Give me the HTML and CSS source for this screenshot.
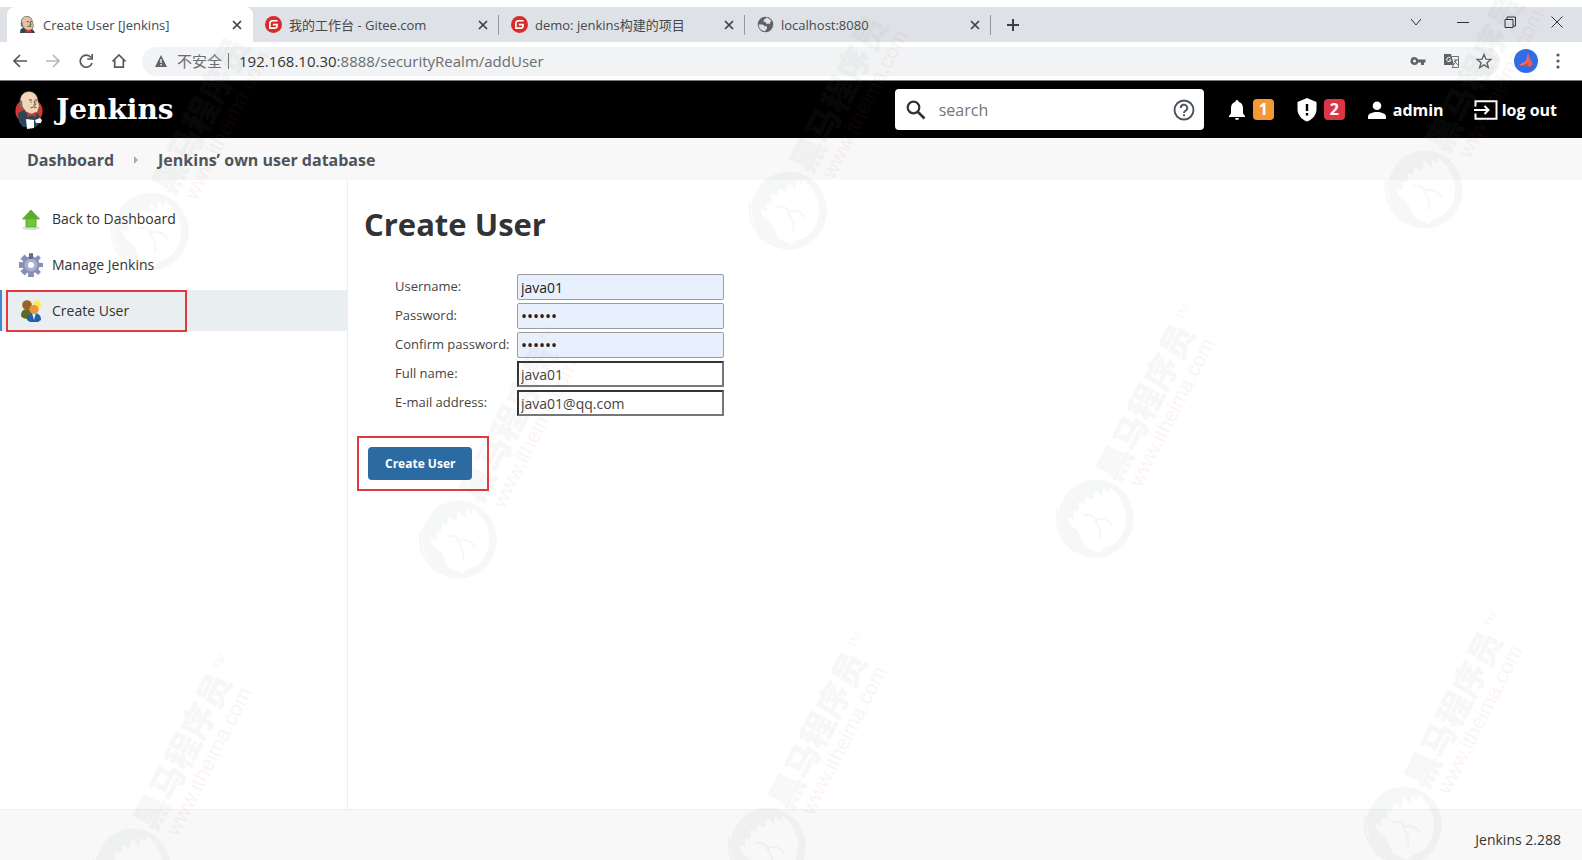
FILE: index.html
```html
<!DOCTYPE html>
<html lang="en">
<head>
<meta charset="utf-8">
<title>Create User [Jenkins]</title>
<link rel="stylesheet" href="styles.css">
</head>
<body>
<svg class="defs" aria-hidden="true">
  <symbol id="butler" viewBox="0 0 28 38">
    <ellipse cx="14" cy="20" rx="13.600" ry="13" fill="#d33833"/>
    <path d="M3 22l6-3 5 4 6-2 4 3 1 8-4 4H8l-4-5z" fill="#2b4757"/>
    <path d="M5 11C5 4 9 .5 14 .5S22.500 4 23 10l1.500 5-2 6-5 2.500-6-2-3-4-3-2z" fill="#f0d6b7" stroke="#5d4a3c" stroke-width=".6"/>
    <path d="M5 9l2 1 .5 5 2 4-2-1-2-3z" fill="#6d6b6d"/>
    <path d="M14 9h3M19.500 9h2.500M19 10l1.500 4h-2M15.500 17q3-2 6-.5" fill="none" stroke="#4b3b30" stroke-width=".9"/>
    <circle cx="16" cy="11" r=".6" fill="#333"/><circle cx="21" cy="11" r=".6" fill="#333"/>
    <path d="M12 21l4 2 4.500-2 .5 5-4.500-1.500L12.500 26z" fill="#d33833"/>
    <path d="M11 28l8 1v8l-7 1z" fill="#fff"/>
    <path d="M20 29l5-2 2 2-1 3-5 0z" fill="#f7f7f7"/>
  </symbol>
  <symbol id="gitee" viewBox="0 0 18 18">
    <circle cx="9" cy="9" r="9" fill="#d92b2b"/>
    <path d="M13.300 5H8.200Q5.200 5 5.200 8v4.800h4.900q2.700 0 2.700-2.600V9.100H8.300" fill="none" stroke="#fff" stroke-width="1.700"/>
  </symbol>
  <symbol id="close" viewBox="0 0 10 10"><path d="M1 1l8 8M9 1L1 9" fill="none" stroke="currentColor" stroke-width="1.700"/></symbol>
</svg>

<div class="page">
  <div class="tabstrip">
    <div class="tab tab-active">
      <svg class="favicon" viewBox="3 0 24 27"><path d="M3 27l1-6 6-3 5 4 6-2 4 3 2 4z" fill="#2b4757"/><path d="M5 11C5 4 9 .5 14 .5S22.500 4 23 10l1.500 5-2 6-5 2.500-6-2-3-4-3-2z" fill="#e0c3a2" stroke="#5d4a3c"/><path d="M5 9l2 1 .5 5 2 5-3-2-2-3z" fill="#6d6b6d"/><path d="M14 9h3M19.500 9h2.500M19 10l1.500 4h-2M15 17q3-2 6-.5" fill="none" stroke="#4b3b30" stroke-width="1.500"/><path d="M12 21l4 2 4.500-2 .5 6-4.500-1.500L12.500 27z" fill="#d33833"/></svg>
      <span class="tab-title">Create User [Jenkins]</span>
      <button class="tab-close" aria-label="Close tab"><svg><use href="#close"/></svg></button>
    </div>
    <div class="tab tab-divided">
      <svg class="favicon"><use href="#gitee"/></svg>
      <span class="tab-title">我的工作台 - Gitee.com</span>
      <button class="tab-close" aria-label="Close tab"><svg><use href="#close"/></svg></button>
    </div>
    <div class="tab tab-divided">
      <svg class="favicon"><use href="#gitee"/></svg>
      <span class="tab-title">demo: jenkins构建的项目</span>
      <button class="tab-close" aria-label="Close tab"><svg><use href="#close"/></svg></button>
    </div>
    <div class="tab tab-divided">
      <svg class="favicon" viewBox="0 0 24 24"><circle cx="12" cy="12" r="11" fill="#5f6368"/><path d="M2.500 12H8l3 2.500h3V18l-3 3.500Q2.500 20 2.500 12zM10 5l4-3 6 4-2 5h-5l-1-3-3 0z" fill="#dee1e6"/></svg>
      <span class="tab-title">localhost:8080</span>
      <button class="tab-close" aria-label="Close tab"><svg><use href="#close"/></svg></button>
    </div>
    <button class="new-tab" aria-label="New tab"><svg width="14" height="14" viewBox="0 0 14 14"><path d="M7 1v12M1 7h12" stroke="currentColor" stroke-width="2"/></svg></button>
    <div class="window-controls">
      <button aria-label="Search tabs"><svg width="12" height="12" viewBox="0 0 12 12"><path d="M1 3l5 6 5-6"/></svg></button>
      <button aria-label="Minimize"><svg width="12" height="12" viewBox="0 0 12 12"><path d="M0 6.500h12"/></svg></button>
      <button aria-label="Restore"><svg width="12" height="12" viewBox="0 0 12 12"><path d="M1 3.500h8v8H1zM3 3V1h8.500v9H9"/></svg></button>
      <button aria-label="Close window"><svg width="12" height="12" viewBox="0 0 12 12"><path d="M.5.5l11 11M11.500.5l-11 11"/></svg></button>
    </div>
  </div>

  <div class="toolbar">
    <div class="nav-buttons">
      <button aria-label="Back"><svg width="14" height="14" viewBox="0 0 14 14"><path d="M14 7H1M7 1L1 7l6 6"/></svg></button>
      <button class="nav-off" aria-label="Forward"><svg width="14" height="14" viewBox="0 0 14 14"><path d="M0 7h13M7 1l6 6-6 6"/></svg></button>
      <button aria-label="Reload"><svg width="14" height="14" viewBox="0 0 14 14"><path d="M12 3.500A6 6 0 1 0 13 9M13.200 0v5H8.200"/></svg></button>
      <button aria-label="Home"><svg width="14" height="14" viewBox="0 0 14 14"><path d="M.5 7.500L7 1l6.500 6.500M2.700 6v7.200h8.600V6"/></svg></button>
    </div>
    <div class="omnibox">
      <svg width="12" height="12" viewBox="0 0 12 12"><path d="M6 0l6 12H0z" fill="#5f6368"/><path d="M6 4v4M6 9v1.500" stroke="#fff" stroke-width="1.300"/></svg>
      <span class="insecure">不安全</span>
      <span class="omni-sep"></span>
      <span class="url"><b>192.168.10.30</b>:8888/securityRealm/addUser</span>
      <div class="omni-icons">
        <svg width="16" height="16" viewBox="0 0 16 16"><path fill-rule="evenodd" d="M4.500 4a4 4 0 1 0 3.700 5.500H11V12h3V9.500h1.500v-3H8.200A4 4 0 0 0 4.500 4zm0 2.500a1.500 1.500 0 1 1 0 3 1.500 1.500 0 0 1 0-3z" fill="#5f6368"/></svg>
        <svg width="16" height="16" viewBox="0 0 16 16"><path d="M1 1h7l3 11H1z" fill="#5f6368"/><path d="M8.500 3.500h7v11H9l2-3M11 7h4M13 6v1q0 3-3 5M11 8l4 4" fill="none" stroke="#6f7378"/><path d="M7.500 5A2.200 2.200 0 1 0 8 7H6" fill="none" stroke="#fff"/></svg>
        <svg width="16" height="16" viewBox="0 0 16 16"><path d="M8 1.500l1.900 4.700 5 .3-3.900 3.200 1.300 4.900L8 11.900l-4.300 2.700L5 9.700 1.100 6.500l5-.3z" fill="none" stroke="#5f6368" stroke-width="1.400"/></svg>
      </div>
    </div>
    <svg class="avatar" viewBox="0 0 24 24"><circle cx="12" cy="12" r="12" fill="#2f6de8"/><path d="M14 4l1 9-6 4-4-1 7-4z" fill="#ff6d5f"/><path d="M14 4l2 5 3 6-3 3-3-2z" fill="#ee5d55"/><path d="M7 17l6-3 2 5-3-2z" fill="#c24b58"/></svg>
    <button class="kebab" aria-label="Menu"><svg width="4" height="16" viewBox="0 0 4 16"><circle cx="2" cy="2" r="1.600"/><circle cx="2" cy="8" r="1.600"/><circle cx="2" cy="14" r="1.600"/></svg></button>
  </div>

  <header class="header">
    <a class="brand" href="#"><svg width="28" height="38"><use href="#butler"/></svg><span>Jenkins</span></a>
    <div class="search">
      <svg width="20" height="20" viewBox="0 0 20 20"><circle cx="7.500" cy="7.500" r="5.800" fill="none" stroke="#333" stroke-width="2.200"/><path d="M12 12l6.500 6.500" stroke="#333" stroke-width="2.600"/></svg>
      <input type="text" placeholder="search" aria-label="search">
      <a href="#" aria-label="Search help"><svg width="22" height="22" viewBox="0 0 22 22" fill="none" stroke="#4d545d" stroke-width="1.900"><circle cx="11" cy="11" r="9.500"/><path d="M7.800 9a3.200 3.200 0 1 1 4.800 2.700Q11 12.600 11 14M11 15.200v2"/></svg></a>
    </div>
    <a class="alert" href="#" aria-label="Notifications"><svg width="18" height="20" viewBox="0 0 18 20"><path d="M9 0a1.600 1.600 0 0 0-1.600 1.700C4.500 2.500 3 5 3 8v5.500L1 16v1h16v-1l-2-2.500V8c0-3-1.500-5.500-4.400-6.300A1.600 1.600 0 0 0 9 0zM7 18a2 2 0 0 0 4 0z" fill="#fff"/></svg><span class="badge badge-orange">1</span></a>
    <a class="alert" href="#" aria-label="Security warnings"><svg width="20" height="24" viewBox="0 0 20 24"><path d="M10 0l9.500 4v7c0 6-4 10.500-9.500 12.500C4.500 21.500.5 17 .5 11V4z" fill="#fff"/><path d="M10 6v7M10 15v2.500" stroke="#000" stroke-width="2.400"/></svg><span class="badge badge-red">2</span></a>
    <a class="account" href="#"><svg width="18" height="18" viewBox="0 0 18 18"><circle cx="9" cy="4.700" r="4.300" fill="#fff"/><path d="M0 18v-2.500C0 12.500 5 11 9 11s9 1.500 9 4.500V18z" fill="#fff"/></svg>admin</a>
    <a class="account logout" href="#"><svg width="24" height="20" viewBox="0 0 24 20" fill="none" stroke="#fff" stroke-width="2"><path d="M1.500 6.500V1.200h21v17.600h-21v-5.300M0 10h14M10.500 6l4 4-4 4"/></svg>log out</a>
  </header>

  <nav class="breadcrumb">
    <a href="#">Dashboard</a>
    <svg width="4" height="8" viewBox="0 0 4 8"><path d="M0 0l4 4-4 4z" fill="#aaa"/></svg>
    <a href="#">Jenkins’ own user database</a>
  </nav>

  <div class="content">
    <nav class="side">
      <a class="task" href="#"><svg viewBox="0 0 24 24"><ellipse cx="12" cy="21" rx="9" ry="2" fill="#ddd"/><path d="M12 3l8.500 9H17v8H7v-8H3.500z" fill="#5cab2a" stroke="#6fae50"/><path d="M8 12h8v7.500H8z" fill="#6bcb35"/></svg>Back to Dashboard</a>
      <a class="task" href="#"><svg viewBox="-12 -12 24 24"><g fill="#8790b4"><circle r="8.500"/><path id="teeth" d="M-2-12h4l1 24h-6z"/><use href="#teeth" transform="rotate(45)"/><use href="#teeth" transform="rotate(90)"/><use href="#teeth" transform="rotate(135)"/></g><circle r="6.500" fill="#a9afd0"/><path d="M-2-11h4v5h-4z" fill="#596b9b"/><circle r="3" fill="#fff"/></svg>Manage Jenkins</a>
      <a class="task task-active" href="#"><svg viewBox="0 0 24 24"><path d="M2 17q0-7 6-7t6 7l-5 3q-5 0-7-3z" fill="#5b6b20"/><circle cx="8" cy="6" r="4.800" fill="#9b6224"/><circle cx="18" cy="5.500" r="4" fill="#ffeb4d"/><path d="M8 21q0-7 7-7t7 7l-3 2h-8z" fill="#245fa8"/><path d="M13 14h4l-2 7z" fill="#e6effb"/><circle cx="15" cy="10.500" r="4.600" fill="#e8963a"/></svg>Create User</a>
      <div class="callout callout-task"></div>
    </nav>
    <main class="main">
      <h1>Create User</h1>
      <form>
        <div class="fields">
          <label for="username">Username:</label><input class="filled" id="username" type="text" value="java01">
          <label for="password1">Password:</label><input class="filled" id="password1" type="password" value="java01">
          <label for="password2">Confirm password:</label><input class="filled" id="password2" type="password" value="java01">
          <label for="fullname">Full name:</label><input id="fullname" type="text" value="java01">
          <label for="email">E-mail address:</label><input id="email" type="text" value="java01@qq.com">
        </div>
        <div class="submit callout"><button type="button">Create User</button></div>
      </form>
    </main>
  </div>

  <footer class="footer"><a href="#">Jenkins 2.288</a></footer>

  <svg class="watermark" viewBox="0 0 1582 860" preserveAspectRatio="xMidYMid slice" aria-hidden="true">
    <g transform="translate(151 230)"><g id="horse"><path fill-rule="evenodd" d="M-25-28A38 39 0 1 1-32 23Q-29 30-22 34-36 22-38-4-33-19-25-28zM-29 0l3 8 8 6 7 15 14 7 6-5Q31 25 30-3 27-20 14-30l-1 6-6-5 0 9-8-7-2 10-7-4-2 8-6-2 1 8-6 2 1 7z"/><path class="mark-line" d="M-12-2Q-3-3 1 3q8-4 16 6M-2 2Q6 12 4 22M-39-8Q-42 20-20 35"/></g><g transform="rotate(-63)"><text class="mark-name" x="40" y="5">黑马程序员</text><text class="mark-tm" x="214" y="-12">TM</text><text class="mark-url" x="46" y="27">www.itheima.com</text></g></g>
    <g transform="translate(789 209)"><use href="#horse"/><g transform="rotate(-63)"><text class="mark-name" x="40" y="5">黑马程序员</text><text class="mark-url" x="46" y="27">www.itheima.com</text></g></g>
    <g transform="translate(1425 188)"><use href="#horse"/><g transform="rotate(-63)"><text class="mark-name" x="40" y="5">黑马程序员</text><text class="mark-url" x="46" y="27">www.itheima.com</text></g></g>
    <g transform="translate(459 538)"><use href="#horse"/><g transform="rotate(-63)"><text class="mark-name" x="40" y="5">黑马程序员</text><text class="mark-tm" x="214" y="-12">TM</text><text class="mark-url" x="46" y="27">www.itheima.com</text></g></g>
    <g transform="translate(1096 517)"><use href="#horse"/><g transform="rotate(-63)"><text class="mark-name" x="40" y="5">黑马程序员</text><text class="mark-tm" x="214" y="-12">TM</text><text class="mark-url" x="46" y="27">www.itheima.com</text></g></g>
    <g transform="translate(133 866)"><use href="#horse"/><g transform="rotate(-63)"><text class="mark-name" x="40" y="5">黑马程序员</text><text class="mark-tm" x="214" y="-12">TM</text><text class="mark-url" x="46" y="27">www.itheima.com</text></g></g>
    <g transform="translate(768 845)"><use href="#horse"/><g transform="rotate(-63)"><text class="mark-name" x="40" y="5">黑马程序员</text><text class="mark-tm" x="214" y="-12">TM</text><text class="mark-url" x="46" y="27">www.itheima.com</text></g></g>
    <g transform="translate(1404 824)"><use href="#horse"/><g transform="rotate(-63)"><text class="mark-name" x="40" y="5">黑马程序员</text><text class="mark-tm" x="214" y="-12">TM</text><text class="mark-url" x="46" y="27">www.itheima.com</text></g></g>
  </svg>
</div>
</body>
</html>
```
FILE: styles.css
```css
* { box-sizing: border-box; }

body {
  margin: 0;
  font-family: "Open Sans", "Noto Sans", "Noto Sans CJK SC", sans-serif;
  font-size: 14px;
  color: #333;
  background: #fff;
}

a { color: inherit; text-decoration: none; }

button {
  display: flex;
  align-items: center;
  justify-content: center;
  padding: 0;
  border: 0;
  background: none;
  color: inherit;
  font-family: inherit;
}

svg { flex: none; }

.defs { position: absolute; width: 0; height: 0; }

.page {
  position: relative;
  display: flex;
  flex-direction: column;
  min-height: 100vh;
  padding-top: 7px;
  overflow: hidden;
}

/* Browser tabs */
.tabstrip {
  display: flex;
  height: 35px;
  padding-left: 7px;
  background: #dee1e6;
}

.tab {
  position: relative;
  display: flex;
  align-items: center;
  flex: 0 1 246px;
  gap: 7px;
  padding: 0 10px 0 12px;
  color: #45494d;
  font-size: 13px;
}

.tab-active { background: #fff; border-radius: 8px 8px 0 0; }

.tab-divided::after {
  content: "";
  position: absolute;
  right: 0;
  top: 8px;
  width: 1px;
  height: 20px;
  background: #95999e;
}

.favicon { width: 17px; height: 17px; }
.tab-title { flex: 1; white-space: nowrap; }
.tab-close { width: 12px; height: 16px; color: #3c4043; }
.tab-close svg { width: 10px; height: 10px; }
.new-tab { width: 44px; color: #3c4043; }

.window-controls { display: flex; height: 30px; margin: 0 2px 0 auto; }
.window-controls button { width: 47px; }
.window-controls path { fill: none; stroke: #333; }

/* Address bar */
.toolbar {
  display: flex;
  align-items: center;
  height: 39px;
  padding: 0 16px 0 13px;
  border-bottom: 1px solid #777;
}

.nav-buttons { display: flex; gap: 19px; width: 129px; color: #55595e; }
.nav-buttons path { fill: none; stroke: currentColor; stroke-width: 1.7; }
.nav-buttons .nav-off { color: #b6b8bb; }

.omnibox {
  display: flex;
  align-items: center;
  flex: 1;
  height: 29px;
  padding: 0 8px 0 13px;
  border-radius: 15px;
  background: #f1f3f4;
  color: #6a6e73;
  font-size: 15px;
  line-height: 20px;
}

.insecure { margin-left: 10px; }
.omni-sep { width: 1px; height: 16px; margin: 0 10px 0 6px; background: #777; }
.url b { color: #333; font-weight: 400; }
.omni-icons { display: flex; gap: 17px; margin-left: auto; }
.avatar { width: 24px; height: 24px; margin-left: 14px; }
.kebab { width: 16px; margin-left: 12px; fill: #55595e; }

/* Jenkins header */
.header {
  display: flex;
  align-items: center;
  height: 57px;
  padding: 0 25px 0 15px;
  background: #000;
  color: #fff;
  font-size: 16px;
  font-weight: 700;
}

.brand {
  display: flex;
  align-items: center;
  gap: 13px;
  margin-right: auto;
  font-family: "DejaVu Serif", serif;
  font-size: 28px;
}

.search {
  display: flex;
  align-items: center;
  width: 309px;
  height: 41px;
  margin-right: 24px;
  padding: 0 9px 0 11px;
  border-radius: 4px;
  background: #fff;
}

.search input {
  flex: 1;
  min-width: 0;
  padding: 0 13px;
  border: 0;
  outline: 0;
  background: none;
  font-family: inherit;
  font-size: 16px;
}

.search input::placeholder { color: #757575; }
.search a, .alert, .account { display: flex; align-items: center; }
.alert { gap: 7px; margin-right: 23px; }

.badge {
  width: 21px;
  height: 21px;
  border-radius: 4px;
  line-height: 21px;
  text-align: center;
}

.badge-orange { background: #f29935; }
.badge-red { background: #dc3545; }
.account { gap: 7px; white-space: nowrap; }
.logout { gap: 4px; margin-left: 30px; }

.breadcrumb {
  display: flex;
  align-items: center;
  gap: 20px;
  height: 42px;
  padding: 2px 27px 0;
  background: #f8f8f8;
  color: #4d545d;
  font-size: 16px;
  font-weight: 700;
}

/* Page body */
.content { display: flex; flex: 1; }

.side {
  position: relative;
  display: flex;
  flex-direction: column;
  gap: 5px;
  width: 348px;
  padding-top: 18px;
  border-right: 1px solid #eee;
  font-weight: 500;
}

.task {
  display: flex;
  align-items: center;
  gap: 9px;
  height: 41px;
  padding-left: 17px;
  border-left: 2px solid transparent;
}

.task svg { width: 24px; height: 24px; }
.task-active { border-color: #4285d0; background: #e9eef1; }

.callout { border: 2px solid #e0393e; }

.callout-task {
  position: absolute;
  left: 6px;
  top: 110px;
  width: 181px;
  height: 42px;
}

.main { flex: 1; padding: 20px 16px; }

h1 { margin: 0; font-size: 31px; line-height: 48px; }

.fields {
  display: grid;
  grid-template-columns: 120px 207px;
  gap: 3px 2px;
  margin: 26px 0 0 31px;
  color: #444;
}

.fields label { font-size: 13px; line-height: 24px; white-space: nowrap; }

.fields input {
  height: 26px;
  padding: 0 2px;
  border: 2px solid;
  border-color: #333 #777 #777 #333;
  background: #fff;
  color: #444;
  font-family: inherit;
  font-size: 14px;
}

.fields .filled {
  padding: 1px 3px;
  border: 1px solid #9a9da3;
  border-radius: 2px;
  background: #e8f0fe;
  color: #222;
}

.fields input[type="password"] { font-size: 16px; }

.submit {
  width: fit-content;
  margin: 20px 0 0 -7px;
  padding: 9px 15px 9px 9px;
}

.submit button {
  height: 33px;
  padding: 0 17px;
  border-radius: 4px;
  background: #2c6aa2;
  color: #fff;
  font-size: 12px;
  font-weight: 700;
}

.footer {
  display: flex;
  align-items: center;
  justify-content: flex-end;
  height: 51px;
  padding: 8px 21px 0;
  border-top: 1px solid #eee;
  background: #f8f8f8;
  font-weight: 500;
}

/* Watermark laid over the whole page */
.watermark {
  position: absolute;
  inset: 0;
  width: 100%;
  height: 100%;
  fill: #778080;
  opacity: 0.06;
  pointer-events: none;
}

.mark-line { fill: none; stroke: #778080; stroke-width: 2; }
.mark-name { font: 900 34px "Noto Sans CJK SC", sans-serif; }
.mark-tm { font: 11px "Liberation Sans", sans-serif; }
.mark-url { font: 21px "Liberation Sans", sans-serif; fill: #c05050; }
```
